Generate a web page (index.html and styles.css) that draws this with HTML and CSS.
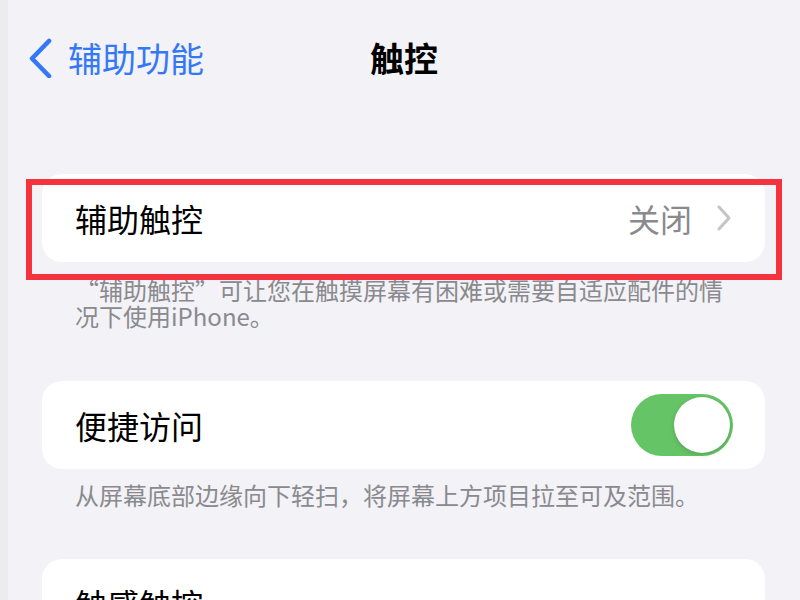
FILE: index.html
```html
<!DOCTYPE html>
<html lang="zh-CN">
<head>
<meta charset="utf-8">
<title>触控</title>
<link rel="stylesheet" href="styles.css">
</head>
<body>
<div class="screen">
  <header class="nav">
    <a class="back" href="#">
      <svg class="back-icon" width="26" height="40" viewBox="0 0 26 40"><path d="M21 3 L4 20.5 L21 38" fill="none" stroke="#3478f6" stroke-width="4.6" stroke-linecap="round" stroke-linejoin="round"/></svg>
      <span>辅助功能</span>
    </a>
    <h1 class="title">触控</h1>
  </header>

  <section class="group group-first">
    <div class="card">
      <div class="row">
        <span class="label">辅助触控</span>
        <span class="value">关闭</span>
        <svg class="chev" width="16" height="26" viewBox="0 0 16 26"><path d="M3 2 L13 13 L3 24" fill="none" stroke="#c4c4c7" stroke-width="3" stroke-linecap="round" stroke-linejoin="round"/></svg>
      </div>
    </div>
    <div class="highlight"></div>
    <p class="footer footer-first">“辅助触控”可让您在触摸屏幕有困难或需要自适应配件的情况下使用iPhone。</p>
  </section>

  <section class="group">
    <div class="card">
      <div class="row">
        <span class="label">便捷访问</span>
        <span class="toggle"><span class="knob"></span></span>
      </div>
    </div>
    <p class="footer">从屏幕底部边缘向下轻扫，将屏幕上方项目拉至可及范围。</p>
  </section>

  <section class="group">
    <div class="card">
      <div class="row">
        <span class="label">触感触控</span>
        <svg class="chev chev-last" width="16" height="26" viewBox="0 0 16 26"><path d="M3 2 L13 13 L3 24" fill="none" stroke="#c4c4c7" stroke-width="3" stroke-linecap="round" stroke-linejoin="round"/></svg>
      </div>
    </div>
  </section>
</div>
</body>
</html>
```

FILE: styles.css
```css
html, body {
  margin: 0;
  padding: 0;
  height: 100%;
  overflow: hidden;
}
body {
  background: #ececee;
  font-family: "Noto Sans CJK SC", "Noto Sans", sans-serif;
}
.screen {
  margin-left: 8px;
  background: #f2f2f7;
  height: 600px;
  overflow: hidden;
}
.nav {
  position: relative;
  height: 116px;
  display: flex;
  align-items: center;
}
.back {
  display: flex;
  align-items: center;
  text-decoration: none;
  color: #3478f6;
  font-size: 34px;
  margin-left: 20px;
  gap: 14px;
  position: relative;
  z-index: 1;
}
.back-icon {
  display: block;
}
.back span {
  line-height: 40px;
}
.title {
  position: absolute;
  left: 0;
  right: 0;
  top: 0;
  bottom: 0;
  margin: 0;
  display: flex;
  align-items: center;
  justify-content: center;
  font-size: 34px;
  font-weight: 700;
  color: #000;
  line-height: 40px;
}
.group {
  position: relative;
  margin: 0 35px 0 34px;
}
.group-first {
  margin-top: 58px;
}
.card {
  background: #fff;
  border-radius: 20px;
}
.row {
  height: 88px;
  display: flex;
  align-items: center;
  padding: 0 32px 0 33px;
}
.label {
  flex: 1;
  font-size: 32px;
  color: #000;
  line-height: 40px;
}
.value {
  font-size: 32px;
  color: #8a8a8e;
  line-height: 40px;
  margin-right: 24px;
}
.chev {
  display: block;
  margin-right: 1px;
}
.chev-last {
  margin-top: 36px;
}
.toggle {
  width: 102px;
  height: 62px;
  border-radius: 31px;
  background: #65c466;
  position: relative;
  display: block;
}
.knob {
  position: absolute;
  right: 3px;
  top: 3px;
  width: 56px;
  height: 56px;
  border-radius: 50%;
  background: #fff;
  box-shadow: 0 2px 5px rgba(0,0,0,0.15), 0 0 1px rgba(0,0,0,0.1);
}
.highlight {
  position: absolute;
  left: -16px;
  right: -17px;
  top: 5px;
  height: 101px;
  box-sizing: border-box;
  border: 6px solid #f5333f;
  pointer-events: none;
}
.footer {
  margin: 0;
  padding: 15px 33px 52px 33px;
  font-size: 24px;
  line-height: 26px;
  color: #8a8a8e;
}
.footer-first {
  padding-bottom: 52px;
}
.group + .group .footer {
  padding-top: 13px;
  padding-bottom: 51px;
}
```
